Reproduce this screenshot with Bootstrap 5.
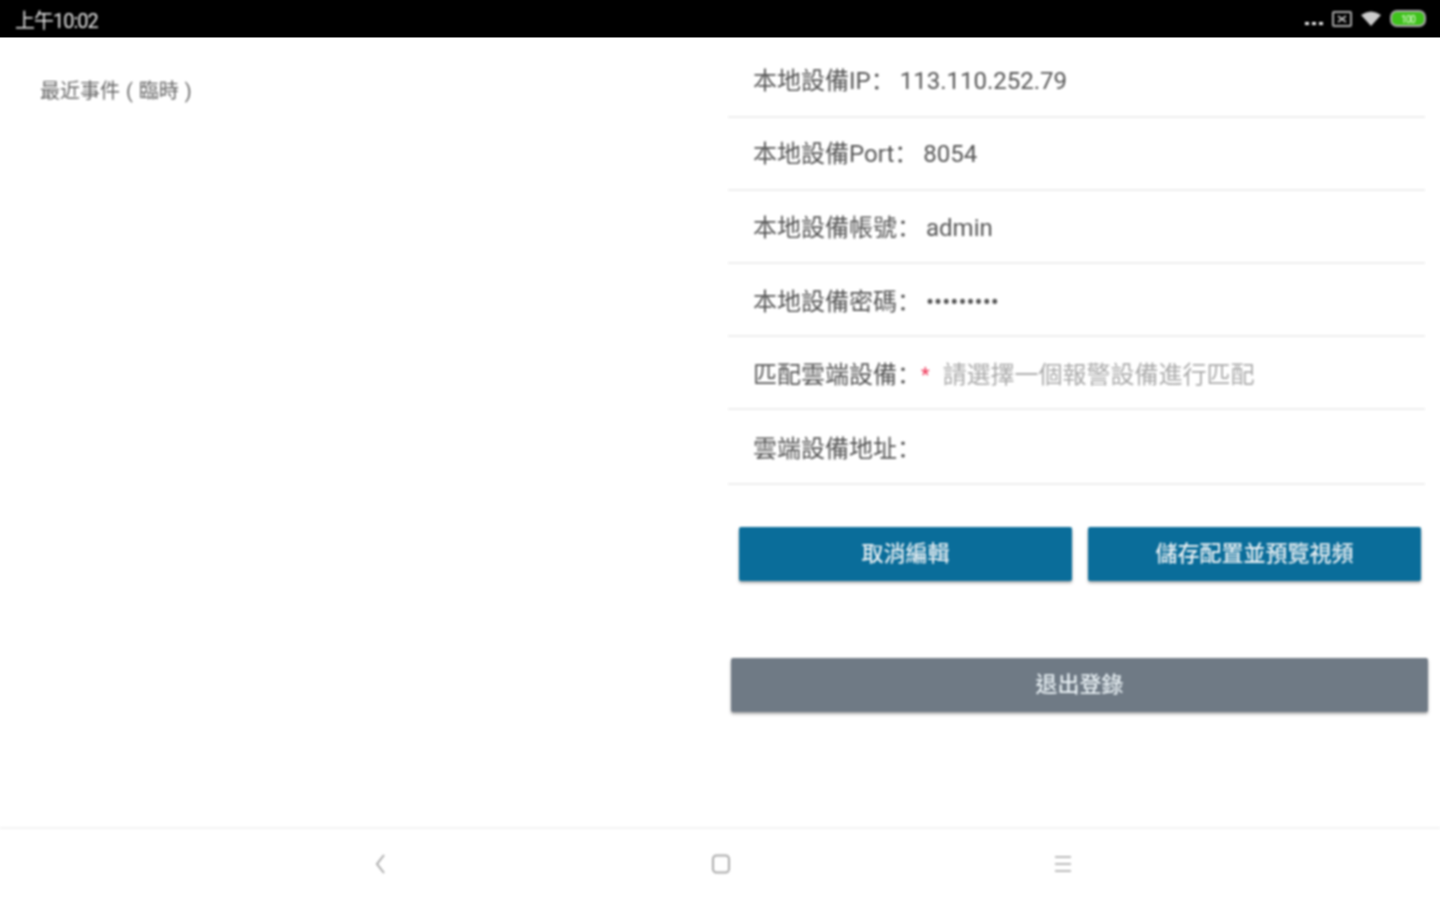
<!DOCTYPE html>
<html lang="zh-Hant">
<head>
    <meta charset="UTF-8">
    <meta name="viewport" content="width=device-width, initial-scale=1.0">
    <title>本地設備</title>
    <link href="https://cdn.jsdelivr.net/npm/bootstrap@5.3.0/dist/css/bootstrap.min.css" rel="stylesheet">
    <style>
        html, body { height: 100%; }
        body {
            width: 1440px;
            height: 900px;
            overflow: hidden;
            background: #fff;
            color: #555;
            font-family: Roboto, "Noto Sans CJK SC", sans-serif;
            font-feature-settings: "locl" 0;
        }
        .screen { height: 900px; }
        .soft { filter: blur(0.9px); }
        .status-bar {
            height: 38px;
            background: #000;
            color: #e8e8e8;
            padding: 4px 14px 0 15px;
            font-size: 20px;
            letter-spacing: -1px;
            border-bottom: 1px solid #888;
        }
        .status-icons { gap: 8px; margin-top: -4px; }
        .main-area { height: 789px; }
        .left-pane { width: 728px; padding: 38px 0 0 40px; font-size: 20px; word-spacing: 1px; color: #666; }
        .right-pane { width: 712px; padding: 7px 12px 0 0; }
        .field-list { margin-right: -9px; width: 697px; }
        .field-row {
            height: 73px;
            padding-left: 25px;
            font-size: 24px;
            border-bottom: 2px solid #eee;
            white-space: nowrap;
        }
        .field-row:nth-child(3) { padding-top: 2px; }
        .field-row:nth-child(n+4) { padding-top: 4px; }
        .field-row:nth-child(6) { height: 75px; }
        .field-row .val { margin-left: 5px; color: #555; }
        .req { color: #ee3355; margin-right: 13px; font-size: 20px; }
        .hint { color: #aaa; }
        .edit-btns { padding: 42px 7px 0 11px; gap: 16px; }
        .act-btn {
            height: 54px;
            border: 0;
            border-radius: 2px;
            color: #e6eef2;
            font-size: 22px;
            font-weight: 500;
            padding: 0 0 2px;
            box-shadow: 0 2px 3px rgba(0,0,0,.35);
        }
        .act-btn.blue { background: #0a6d9a; flex: 1 1 0; }
        .act-btn.gray { background: #6f7a85; width: 697px; margin: 77px 0 0 3px; display: block; }
        .nav-bar {
            height: 73px;
            border-top: 2px solid #f3f3f3;
            padding: 0 0 1px 2px;
        }
        .nav-slot { width: 342px; }
    </style>
</head>
<body>
<div class="screen d-flex flex-column">
    <div class="status-bar d-flex justify-content-between align-items-center">
        <span class="soft">上午10:02</span>
        <div class="status-icons soft d-flex align-items-center">
            <svg width="20" height="18" viewBox="0 0 20 18"><path d="M1 12h4v3H1zM8 12h4v3H8zM15 12h4v3h-4z" fill="#eee"/></svg>
            <svg width="20" height="16" viewBox="0 0 20 16"><rect x="1" y="1" width="18" height="14" rx="1" fill="none" stroke="#aaa" stroke-width="2"/><path d="M6 5l8 6M14 5l-8 6" stroke="#bbb" stroke-width="1.6"/></svg>
            <svg width="22" height="16" viewBox="0 0 22 16"><path d="M1 4Q11-3 21 4L11 15Z" fill="#ccc"/></svg>
            <svg width="36" height="17" viewBox="0 0 36 17"><rect x="1" y="1" width="34" height="15" rx="6" fill="#3fc21c" stroke="#aaa" stroke-width="2"/><text x="18" y="12.5" font-size="10" fill="#eaffe0" text-anchor="middle" font-family="Roboto">100</text></svg>
        </div>
    </div>
    <div class="main-area soft d-flex">
        <div class="left-pane">最近事件 ( 臨時 )</div>
        <div class="right-pane">
            <div class="field-list">
                <div class="field-row d-flex align-items-center">本地設備IP：<span class="val">113.110.252.79</span></div>
                <div class="field-row d-flex align-items-center">本地設備Port：<span class="val">8054</span></div>
                <div class="field-row d-flex align-items-center">本地設備帳號：<span class="val">admin</span></div>
                <div class="field-row d-flex align-items-center">本地設備密碼：<span class="val">•••••••••</span></div>
                <div class="field-row d-flex align-items-center">匹配雲端設備：<span class="req">*</span><span class="hint">請選擇一個報警設備進行匹配</span></div>
                <div class="field-row d-flex align-items-center">雲端設備地址：</div>
            </div>
            <div class="edit-btns d-flex">
                <button type="button" class="btn act-btn blue">取消編輯</button>
                <button type="button" class="btn act-btn blue">儲存配置並預覽視頻</button>
            </div>
            <button type="button" class="btn act-btn gray">退出登錄</button>
        </div>
    </div>
    <div class="nav-bar soft d-flex align-items-center justify-content-center">
        <div class="nav-slot d-flex justify-content-center"><svg width="14" height="22" viewBox="0 0 14 22"><path d="M12 2L5 11l7 9" fill="none" stroke="#aaa" stroke-width="2"/></svg></div>
        <div class="nav-slot d-flex justify-content-center"><svg width="20" height="20" viewBox="0 0 20 20"><rect x="2" y="1.5" width="16" height="17" rx="3.5" fill="none" stroke="#aaa" stroke-width="2"/></svg></div>
        <div class="nav-slot d-flex justify-content-center"><svg width="20" height="18" viewBox="0 0 20 18"><path d="M2 2h16M2 9h16M2 16h16" stroke="#bbb" stroke-width="2"/></svg></div>
    </div>
</div>
</body>
</html>
